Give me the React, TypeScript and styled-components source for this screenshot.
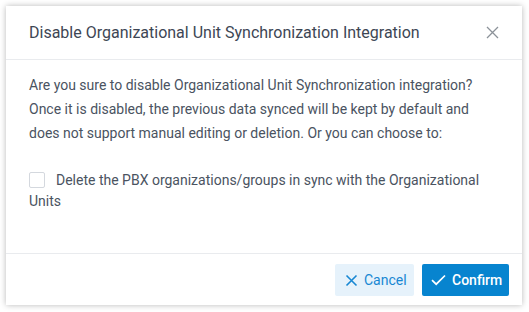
import React from "react";
import styled, { createGlobalStyle } from "styled-components";

const Global = createGlobalStyle`
  html, body { margin: 0; padding: 0; background: #ffffff; }
  body { font-family: Roboto, "Noto Sans", Arial, sans-serif; }
  * { box-sizing: border-box; }
`;

const Page = styled.div`
  padding: 6px 7px 6px 6px;
  width: 529px;
  height: 312px;
`;

const Dialog = styled.div`
  width: 516px;
  height: 299px;
  background: #fff;
  box-shadow: 0 0 6px rgba(0, 0, 0, 0.28);
  display: flex;
  flex-direction: column;
`;

const Header = styled.div`
  height: 54px;
  padding: 0 22px 0 23px;
  display: flex;
  align-items: center;
  justify-content: space-between;
  border-bottom: 1px solid #e9ebee;
`;

const Title = styled.div`
  font-size: 16px;
  color: #3d4654;
  font-weight: 400;
`;

const CloseBtn = styled.button`
  border: none;
  background: none;
  padding: 0;
  width: 16px;
  height: 16px;
  display: flex;
  align-items: center;
  justify-content: center;
  cursor: pointer;
`;

const Body = styled.div`
  flex: 1;
  padding: 13px 20px 0 23px;
  color: #4a5361;
  font-size: 14px;
`;

const Paragraph = styled.p`
  margin: 0;
  line-height: 24px;
`;

const CheckRow = styled.label`
  display: block;
  margin-top: 25px;
  line-height: 21px;
`;

const Box = styled.span`
  display: inline-block;
  width: 16px;
  height: 16px;
  border: 1px solid #d4d8de;
  border-radius: 2px;
  vertical-align: -3px;
  margin-right: 11px;
  background: #fff;
`;

const Footer = styled.div`
  height: 52px;
  border-top: 1px solid #e9ebee;
  display: flex;
  justify-content: flex-end;
  align-items: flex-start;
  gap: 8px;
  padding: 10px 13px 0 0;
`;

const Button = styled.button<{ $primary?: boolean }>`
  height: 32px;
  border: none;
  border-radius: 2px;
  display: flex;
  align-items: center;
  gap: 6px;
  font-family: Roboto, "Noto Sans", Arial, sans-serif;
  font-size: 14px;
  font-weight: ${(p) => (p.$primary ? 500 : 400)};
  background: ${(p) => (p.$primary ? "#0784cf" : "#e6f2fb")};
  color: ${(p) => (p.$primary ? "#ffffff" : "#1787d3")};
  cursor: pointer;
`;

const CancelButton = styled(Button)`
  width: 79px;
  padding: 0 0 0 10px;
`;

const ConfirmButton = styled(Button)`
  width: 87px;
  padding: 0 0 0 9px;
`;

export default function App() {
  return (
    <>
      <Global />
      <Page>
        <Dialog>
          <Header>
            <Title>Disable Organizational Unit Synchronization Integration</Title>
            <CloseBtn aria-label="Close">
              <svg width="13" height="13" viewBox="0 0 13 13">
                <path d="M1 1L12 12M12 1L1 12" stroke="#8c9299" strokeWidth="1.3" />
              </svg>
            </CloseBtn>
          </Header>
          <Body>
            <Paragraph>
              Are you sure to disable Organizational Unit Synchronization integration?
              Once it is disabled, the previous data synced will be kept by default and
              does not support manual editing or deletion. Or you can choose to:
            </Paragraph>
            <CheckRow>
              <Box />
              Delete the PBX organizations/groups in sync with the Organizational Units
            </CheckRow>
          </Body>
          <Footer>
            <CancelButton>
              <svg width="13" height="13" viewBox="0 0 13 13">
                <path d="M1.5 1.5L11.5 11.5M11.5 1.5L1.5 11.5" stroke="#1787d3" strokeWidth="1.6" />
              </svg>
              Cancel
            </CancelButton>
            <ConfirmButton $primary>
              <svg width="15" height="12" viewBox="0 0 15 12">
                <path d="M1 6.2L5.2 10.2L14 1.5" stroke="#ffffff" strokeWidth="1.7" fill="none" />
              </svg>
              Confirm
            </ConfirmButton>
          </Footer>
        </Dialog>
      </Page>
    </>
  );
}
